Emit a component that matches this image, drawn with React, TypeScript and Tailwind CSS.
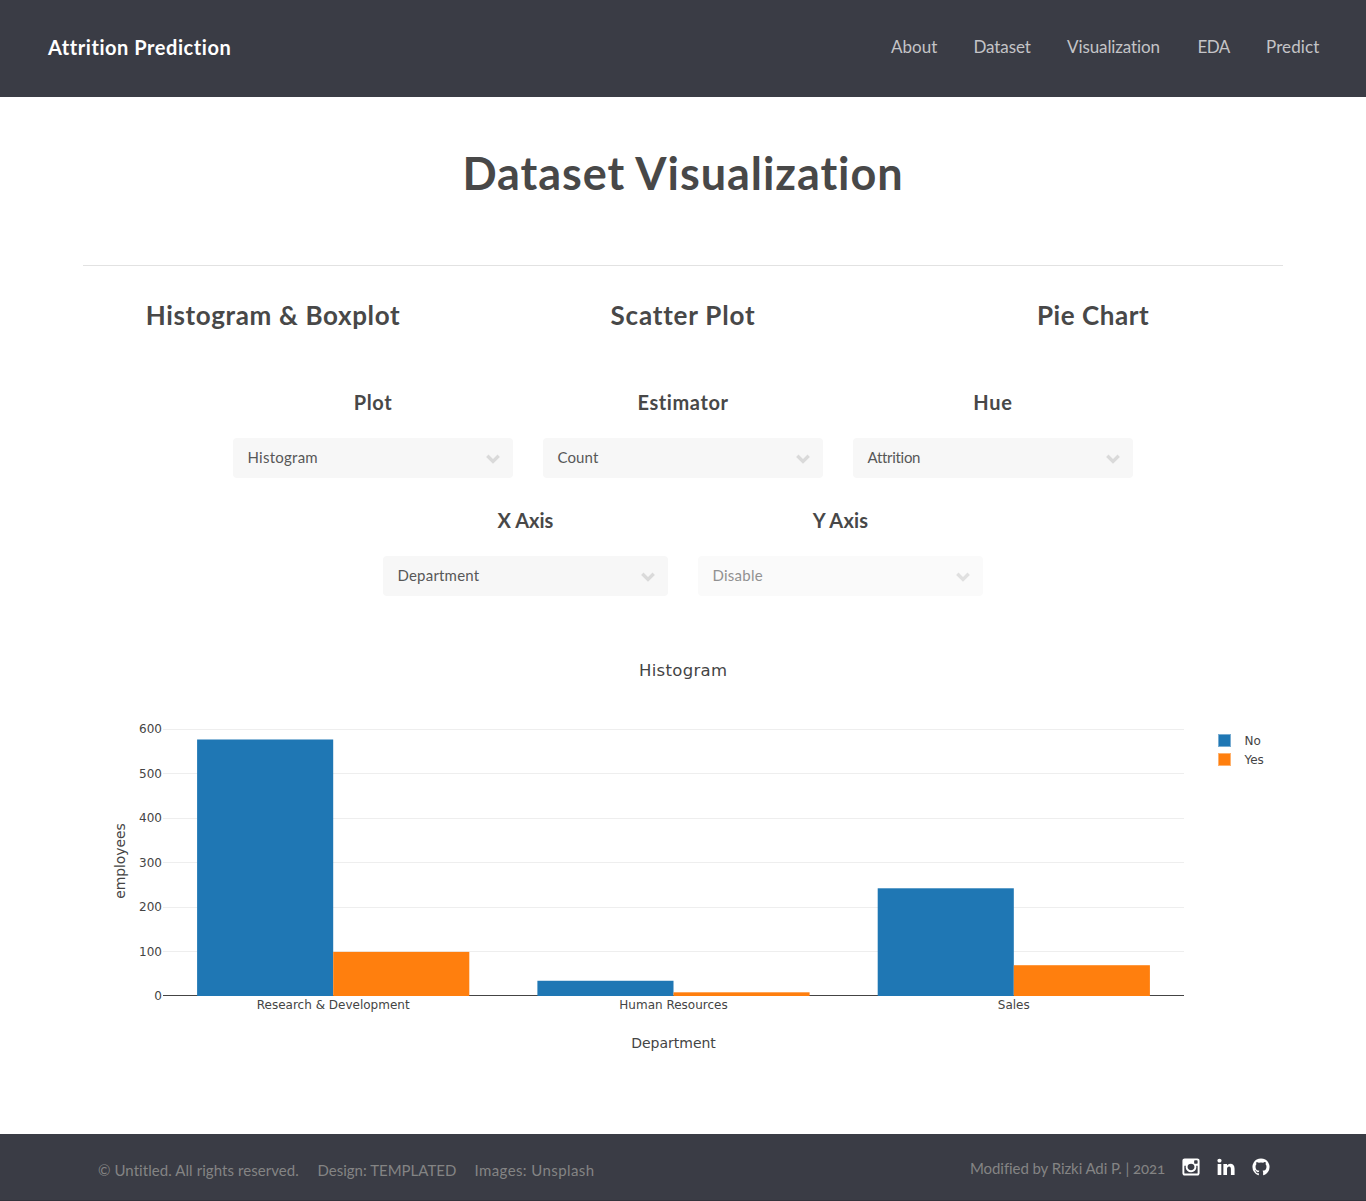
type Option = { label: string; labelClass: string; value: string; valueClass: string; disabled?: boolean };

const nav = [
  { label: "About", className: "w-[46px] tracking-[0.05px]" },
  { label: "Dataset", className: "w-[57px] tracking-[-0.1px]" },
  { label: "Visualization", className: "w-[94px] tracking-[-0.1px]" },
  { label: "EDA", className: "w-[32px] tracking-[-0.6px]" },
  { label: "Predict", className: "w-[53px] tracking-[0.1px]" },
];

const tabs = [
  { label: "Histogram & Boxplot", className: "tracking-[0.65px]" },
  { label: "Scatter Plot", className: "tracking-[0.8px]" },
  { label: "Pie Chart", className: "tracking-[0.55px]" },
];

const firstRow: Option[] = [
  { label: "Plot", labelClass: "tracking-[0.6px]", value: "Histogram", valueClass: "tracking-[0.25px]" },
  { label: "Estimator", labelClass: "tracking-[0.6px]", value: "Count", valueClass: "tracking-[0.1px]" },
  { label: "Hue", labelClass: "tracking-[0.8px]", value: "Attrition", valueClass: "tracking-[-0.3px]" },
];

const secondRow: Option[] = [
  { label: "X Axis", labelClass: "tracking-[0px]", value: "Department", valueClass: "tracking-[0.2px]" },
  { label: "Y Axis", labelClass: "tracking-[0.2px]", value: "Disable", valueClass: "tracking-[0.25px]", disabled: true },
];

const BLUE = "#1f77b4";
const ORANGE = "#ff7f0e";
const BASE = 995.5;
const UNIT = 266.5 / 600;

const categories = [
  { name: "Research & Development", center: 333.2, no: 577.5, yes: 99.3 },
  { name: "Human Resources", center: 673.5, no: 34.3, yes: 8.3 },
  { name: "Sales", center: 1013.8, no: 242.5, yes: 69.3 },
];

function Select({ option }: { option: Option }) {
  return (
    <div className="flex flex-1 flex-col">
      <h3 className={`flex h-[28px] items-center justify-center text-[20px] font-bold ${option.labelClass}`}>{option.label}</h3>
      <button
        disabled={option.disabled}
        className={`mt-[22px] flex h-10 items-center justify-between rounded-[4px] pr-[12px] pl-[14.5px] text-[15px] ${option.disabled ? "bg-[#fafafa] text-[#919191]" : "bg-[#f7f7f7] text-[#585858]"}`}
      >
        <span className={`-mt-0.5 ${option.valueClass}`}>{option.value}</span>
        <svg width="16" height="12" viewBox="0 0 16 12" className="mt-px" fill="none" stroke={option.disabled ? "#e0e0e0" : "#dadada"} strokeWidth="3.4">
          <path d="M2.3 2.8 8 8.4l5.7-5.6" />
        </svg>
      </button>
    </div>
  );
}

function Chart() {
  return (
    <svg width="1200" height="450" viewBox="83 635 1200 450" fill="#444" fontFamily="'DejaVu Sans', sans-serif" fontSize="12">
      <text x="683" y="676" fontSize="16.5" textAnchor="middle" textLength="88" lengthAdjust="spacing">Histogram</text>
      {[600, 500, 400, 300, 200, 100, 0].map((v) => (
        <g key={v}>
          {v > 0 && <rect x="163" y={Math.ceil(BASE - v * UNIT - 0.5)} width="1021" height="1" fill="#eeeeee" />}
          <text x="162" y={Math.ceil(BASE - v * UNIT) + 4.3} textAnchor="end">{v}</text>
        </g>
      ))}
      <rect x="163" y="995" width="1021" height="1" />
      {categories.map((c) => (
        <g key={c.name}>
          <rect x={c.center - 136.1} y={996 - c.no * UNIT} width="136.1" height={c.no * UNIT} fill={BLUE} />
          <rect x={c.center} y={996 - c.yes * UNIT} width="136.1" height={c.yes * UNIT} fill={ORANGE} />
          <text x={c.center} y="1009" textAnchor="middle">{c.name}</text>
        </g>
      ))}
      <text x="673.5" y="1048" fontSize="14" textAnchor="middle">Department</text>
      <text transform="translate(125 861) rotate(-90)" fontSize="14" textAnchor="middle" textLength="75.4">employees</text>
      <rect x="1218.5" y="734.5" width="12" height="12" fill={BLUE} stroke="#79add2" />
      <text x="1244.5" y="745">No</text>
      <rect x="1218.5" y="753.5" width="12" height="12" fill={ORANGE} stroke="#ffb26e" />
      <text x="1244.5" y="764">Yes</text>
    </svg>
  );
}

const icons = [
  "M1490 1426v-648h-135q20 63 20 131 0 126-64 232.5t-174 168.5-240 62q-197 0-337-135.5t-140-327.5q0-68 20-131h-141v648q0 26 17.5 43.5t43.5 17.5h1069q25 0 43-17.5t18-43.5zm-284-533q0-124-90.5-211.5t-218.5-87.5q-127 0-217.5 87.5t-90.5 211.5 90.5 211.5 217.5 87.5q128 0 218.5-87.5t90.5-211.5zm284-360v-165q0-28-20-48.5t-49-20.5h-174q-29 0-49 20.5t-20 48.5v165q0 29 20 49t49 20h174q29 0 49-20t20-49zm174-208v1142q0 81-58 139t-139 58h-1142q-81 0-139-58t-58-139v-1142q0-81 58-139t139-58h1142q81 0 139 58t58 139z",
  "M477 625v991h-330v-991h330zm21-306q1 73-50.5 122t-135.5 49h-2q-82 0-132-49t-50-122q0-74 51.5-122.5t134.5-48.5 133 48.5 51 122.5zm1166 729v568h-329v-530q0-105-40.5-164.5t-126.5-59.5q-63 0-105.5 34.5t-63.5 85.5q-11 30-11 81v553h-329q2-399 2-647t-1-296l-1-48h329v144h-2q20-32 41-56t56.5-52 87-43.5 114.5-15.5q171 0 275 113.5t104 332.5z",
  "M896 128q209 0 385.5 103t279.5 279.5 103 385.5q0 251-146.5 451.5t-378.5 277.5q-27 5-40-7t-13-30q0-3 .5-76.5t.5-134.5q0-97-52-142 57-6 102.5-18t94-39 81-66.5 53-105 20.5-150.5q0-119-79-206 37-91-8-204-28-9-81 11t-92 44l-38 24q-93-26-192-26t-192 26q-16-11-42.5-27t-83.5-38.5-85-13.5q-45 113-8 204-79 87-79 206 0 85 20.5 150t52.5 105 80.5 67 94 39 102.5 18q-39 36-49 103-21 10-45 15t-57 5-65.5-21.5-55.5-62.5q-19-32-48.5-52t-49.5-24l-20-3q-21 0-29 4.5t-5 11.5 9 14 13 12l7 5q22 10 43.5 38t31.5 51l10 23q13 38 44 61.5t67 30 69.5 7 55.5-3.5l23-4q0 38 .5 88.5t.5 54.5q0 18-13 30t-40 7q-232-77-378.5-277.5t-146.5-451.5q0-209 103-385.5t279.5-279.5 385.5-103z",
];

export default function App() {
  return (
    <div className="flex h-[1201px] flex-col bg-white font-['Lato',sans-serif] whitespace-nowrap text-[#484848]">
      <header className="flex h-[97px] shrink-0 items-center justify-between bg-[#3a3c45] px-12 pb-[3px]">
        <div className="text-[20px] font-bold tracking-[0.55px] text-white">Attrition Prediction</div>
        <nav className="-mr-px flex gap-[36.5px] text-[17px] text-[#c4c4c7]">
          {nav.map((item) => (
            <a key={item.label} className={item.className}>{item.label}</a>
          ))}
        </nav>
      </header>

      <main className="flex grow flex-col">
        <section className="mx-[83px] flex h-[169px] items-start justify-center border-b border-[#e2e2e2] pt-[42px]">
          <h1 className="text-[45px] leading-[68px] font-bold tracking-[0.95px]">Dataset Visualization</h1>
        </section>
        <section className="mx-[68px] mt-[29px] grid h-[40px] grid-cols-3 items-center text-center text-[26px] font-bold">
          {tabs.map((t) => (
            <h2 key={t.label} className={t.className}>{t.label}</h2>
          ))}
        </section>
        <section className="mx-auto mt-[53px] flex w-[900px] gap-[30px]">
          {firstRow.map((o) => (
            <Select key={o.label} option={o} />
          ))}
        </section>
        <section className="mx-auto mt-[28px] flex w-[600px] gap-[30px]">
          {secondRow.map((o) => (
            <Select key={o.label} option={o} />
          ))}
        </section>
        <section className="mx-auto mt-[39px]">
          <Chart />
        </section>
      </main>

      <footer className="flex h-[67px] shrink-0 items-center justify-between border-b border-[#33333b] bg-[#3a3c45] px-[98px] text-[15px] text-[#848484]">
        <div className="flex pt-[7px]">
          <span className="w-[219.5px] tracking-[0.07px]">© Untitled. All rights reserved.</span>
          <span className="w-[157px]">Design: TEMPLATED</span>
          <span className="tracking-[0.4px]">Images: Unsplash</span>
        </div>
        <div className="-mr-[2px] flex items-center pt-[2px]">
          <span className="mr-[16px] w-[195px] tracking-[-0.08px] oldstyle-nums">Modified by Rizki Adi P. | 2021</span>
          <div className="-mt-[2px] -mr-px flex gap-[15px]">
            {icons.map((d) => (
              <svg key={d} width="20" height="20" viewBox="0 0 1792 1792" fill="#fff">
                <path d={d} />
              </svg>
            ))}
          </div>
        </div>
      </footer>
    </div>
  );
}
